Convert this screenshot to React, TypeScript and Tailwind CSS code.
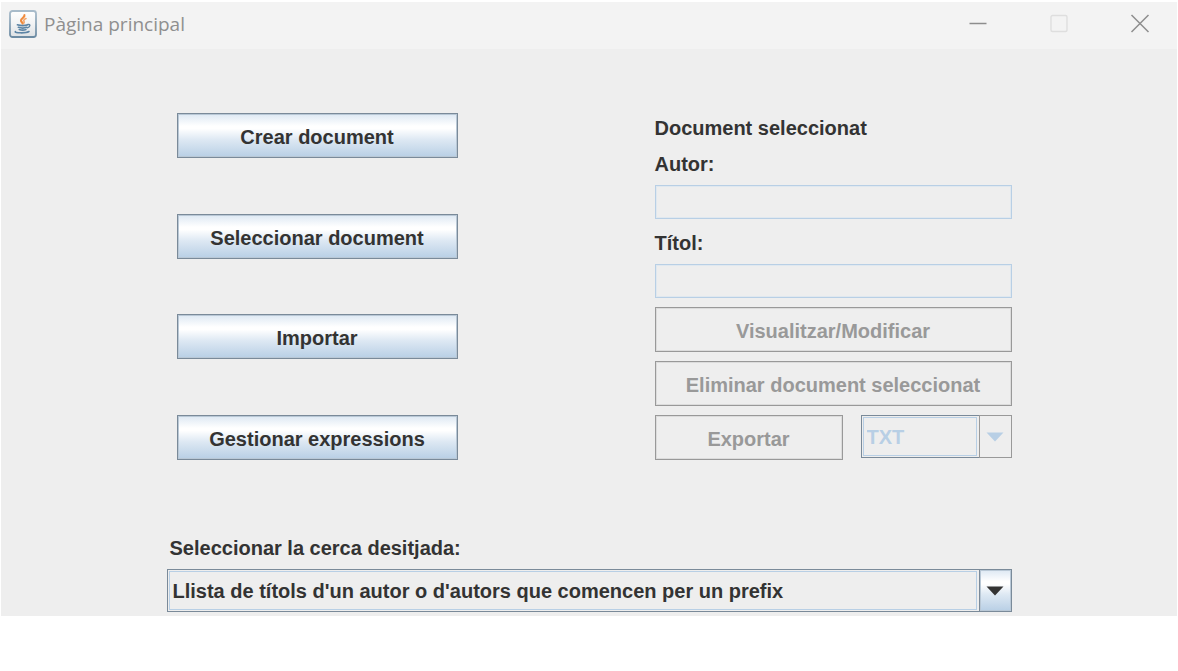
import type { ReactNode } from "react";

const labelClass = "flex h-[30px] items-center";
const fieldClass =
  "block h-[34px] w-full border border-[#b8cfe5] bg-[#eeeeee] px-2 shadow-[inset_0_0_0_1px_#e0e8ef] outline-none";

function JavaIcon() {
  return (
    <svg width="28" height="28" viewBox="0 0 28 28" aria-hidden="true">
      <defs>
        <linearGradient id="tile" x1="0" y1="0" x2="0" y2="1">
          <stop offset="0" stopColor="#ffffff" />
          <stop offset="0.5" stopColor="#f2f3f4" />
          <stop offset="1" stopColor="#dde1e4" />
        </linearGradient>
        <linearGradient id="frame" x1="0" y1="0" x2="0" y2="1">
          <stop offset="0" stopColor="#a9bccb" />
          <stop offset="1" stopColor="#6c8ba3" />
        </linearGradient>
      </defs>
      <rect x="1" y="1" width="26" height="26" rx="2.5" fill="url(#tile)" stroke="url(#frame)" strokeWidth="1.8" />
      <g fill="none" strokeLinecap="round" strokeLinejoin="round">
        <path d="M15.4 5.2c.8 2.2-3.6 3.2-3.4 5.4.1 1.3 1.6 2 1.6 3" stroke="#f08a3c" strokeWidth="2.2" />
        <path d="M17 8.6c-2 .8-2.6 1.7-2 2.7.4.8.2 1.5-.4 2.1" stroke="#f3a468" strokeWidth="1.6" />
        <path d="M8.4 14.8c2.8.9 7.8.9 10.4 0" stroke="#5c84a5" strokeWidth="1.6" />
        <path d="M9.4 17.3c2.4.8 6.4.8 8.4 0" stroke="#5c84a5" strokeWidth="1.7" />
        <path d="M10.2 19.5c2 .7 5 .7 6.8 0" stroke="#5c84a5" strokeWidth="1.5" />
        <path d="M18.9 14.5c2.8-.6 2.7 2.2-.5 3.3" stroke="#5c84a5" strokeWidth="1.4" />
        <path d="M6.4 21.6c-1.4 1.3 10 2 13.6-.1" stroke="#5c84a5" strokeWidth="1.6" />
      </g>
    </svg>
  );
}

function TitleBar() {
  return (
    <header className="flex h-[47px] items-center bg-[#f3f3f3] pr-[27px] pb-1 pl-2">
      <JavaIcon />
      <h1 className="ml-[7px] font-['Open_Sans','Noto_Sans',sans-serif] text-[19px] leading-6 font-normal text-[#8f8f8f]">
        Pàgina principal
      </h1>
      <div className="ml-auto flex items-center gap-[61px]">
        <button type="button" aria-label="Minimitzar">
          <svg width="20" height="20" viewBox="0 0 20 20" stroke="#8d8d8d" strokeWidth="1.5">
            <path d="M1.5 9.5h17" />
          </svg>
        </button>
        <button type="button" aria-label="Maximitzar" disabled>
          <svg width="20" height="20" viewBox="0 0 20 20" fill="none" stroke="#dedede" strokeWidth="1.4">
            <rect x="2" y="1.5" width="16" height="16" rx="1.5" />
          </svg>
        </button>
        <button type="button" aria-label="Tancar">
          <svg width="20" height="20" viewBox="0 0 20 20" stroke="#8d8d8d" strokeWidth="1.5">
            <path d="M1.5 1l17 17M18.5 1l-17 17" />
          </svg>
        </button>
      </div>
    </header>
  );
}

function ActionButton({ children }: { children: ReactNode }) {
  return (
    <button
      type="button"
      className="h-[45px] w-full border border-[#7a8a99] bg-linear-[to_bottom,#dde8f3_0%,#ffffff_28%,#ffffff_34%,#dde8f3_60%,#b8cfe5_100%] pt-[3px] font-bold shadow-[inset_0_0_0_1px_#b9c8d6]"
    >
      {children}
    </button>
  );
}

function DisabledButton({ children }: { children: ReactNode }) {
  return (
    <button
      type="button"
      disabled
      className="h-[45px] w-full border border-[#999999] pt-[3px] font-bold text-[#999999] shadow-[inset_0_0_0_1px_#dcdcdc]"
    >
      {children}
    </button>
  );
}

function Combo({ id, label, options, disabled = false }: { id: string; label?: string; options: string[]; disabled?: boolean }) {
  return (
    <div className="relative h-[43px] w-full">
      <select
        id={id}
        aria-label={label}
        disabled={disabled}
        className={
          "h-full w-full appearance-none border border-[#7a8a99] bg-[#eeeeee] pr-9 pl-[5px] font-bold opacity-100 outline-none " +
          (disabled ? "text-[#b8cfe5]" : "text-[#333333]")
        }
      >
        {options.map((option) => (
          <option key={option}>{option}</option>
        ))}
      </select>
      <span className="pointer-events-none absolute top-0.5 right-[35px] bottom-0.5 left-0.5 border border-[#b8cfe5]" />
      <span
        className={
          "pointer-events-none absolute inset-y-0 right-0 flex w-[33px] items-center justify-center border " +
          (disabled
            ? "border-[#999999] bg-[#eeeeee]"
            : "border-[#7a8a99] bg-linear-[to_bottom,#dde8f3_0%,#ffffff_28%,#ffffff_34%,#dde8f3_60%,#b8cfe5_100%] shadow-[inset_0_0_0_1px_#b9c8d6]")
        }
      >
        <svg width="18" height="10" viewBox="0 0 18 10" fill={disabled ? "#b8cfe5" : "#333333"} aria-hidden="true">
          <path d="M0.5 0.5h17L9 9.5z" />
        </svg>
      </span>
    </div>
  );
}

export default function App() {
  return (
    <div className="min-h-screen bg-white pt-0.5 pr-px pl-px font-['Liberation_Sans',Arial,sans-serif] text-[20px] leading-6 font-bold text-[#333333]">
      <TitleBar />
      <main className="bg-[#eeeeee] px-4 pt-16 pb-1">
        <div className="mx-auto max-w-[845px]">
          <div className="flex justify-between gap-8 pl-[10px]">
            <nav className="flex w-[281px] flex-col justify-between">
              <ActionButton>Crear document</ActionButton>
              <ActionButton>Seleccionar document</ActionButton>
              <ActionButton>Importar</ActionButton>
              <ActionButton>Gestionar expressions</ActionButton>
            </nav>
            <section className="flex w-[357px] flex-col gap-[9px]">
              <div className="flex flex-col gap-[6px]">
                <h2 className={labelClass}>Document seleccionat</h2>
                <label htmlFor="autor" className={labelClass}>
                  Autor:
                </label>
                <input id="autor" type="text" disabled className={fieldClass} />
              </div>
              <div className="flex flex-col gap-[6px]">
                <label htmlFor="titol" className={labelClass}>
                  Títol:
                </label>
                <input id="titol" type="text" disabled className={fieldClass} />
              </div>
              <DisabledButton>Visualitzar/Modificar</DisabledButton>
              <DisabledButton>Eliminar document seleccionat</DisabledButton>
              <div className="flex items-start gap-[18px]">
                <div className="flex-1">
                  <DisabledButton>Exportar</DisabledButton>
                </div>
                <div className="w-[151px]">
                  <Combo id="format" label="Format" options={["TXT"]} disabled />
                </div>
              </div>
            </section>
          </div>
          <div className="mt-[73px] flex flex-col gap-[6px]">
            <label htmlFor="cerca" className={labelClass + " pl-[3px]"}>
              Seleccionar la cerca desitjada:
            </label>
            <Combo id="cerca" options={["Llista de títols d'un autor o d'autors que comencen per un prefix"]} />
          </div>
        </div>
      </main>
    </div>
  );
}
